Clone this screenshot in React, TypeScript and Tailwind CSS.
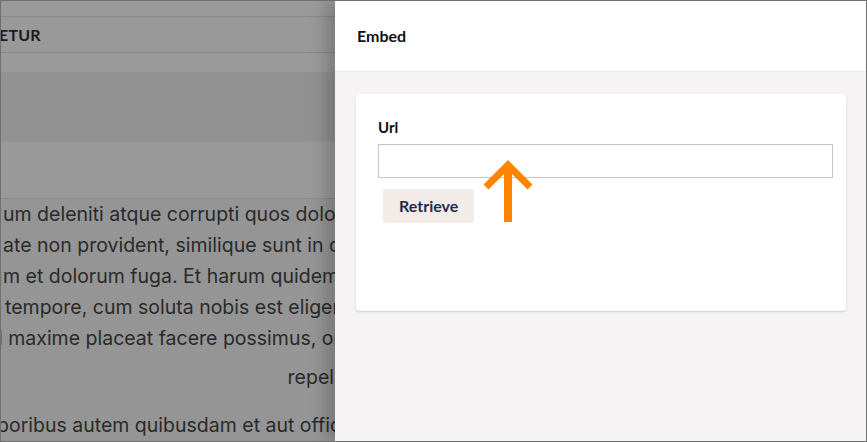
import React from 'react';

const lines = [
  { text: 'um deleniti atque corrupti quos dolores et quas', cls: 'pl-[2px]' },
  { text: 'ate non provident, similique sunt in culpa qui', cls: 'pl-[2px]' },
  { text: 'm et dolorum fuga. Et harum quidem rerum', cls: 'pl-[2px]' },
  { text: 'tempore, cum soluta nobis est eligendi optio', cls: 'pl-[4px]' },
  { text: 'l maxime placeat facere possimus, omnis', cls: 'ml-[-3px]' },
];

const UnderPage: React.FC = () => (
  <div className="w-[334px] shrink-0 flex flex-col bg-[#959595] overflow-hidden font-['Inter',sans-serif]">
    <div className="h-[16px] bg-[#9a9a9a] border-b border-[#888888]" />
    <div className="h-[36px] bg-[#999999] border-b border-[#878787] flex items-center">
      <span className="ml-[-2px] text-[16px] font-bold text-[#1c1c1c] font-['Lato',sans-serif] tracking-[0.2px]">ETUR</span>
    </div>
    <div className="h-[20px] bg-[#9a9a9a] border-b border-[#939393]" />
    <div className="h-[69px] bg-[#929191]" />
    <div className="h-[57px] bg-[#999999] border-b border-[#8b8b8b]" />
    <div className="flex flex-col text-[19.5px] leading-[31px] text-[#2a2a2a] whitespace-nowrap">
      {lines.map((l, i) => (
        <div key={i} className={`overflow-hidden ${l.cls}`}>{l.text}</div>
      ))}
      <div className="mt-[8px] flex justify-end pr-[1px]">repel</div>
      <div className="mt-[17px] ml-[-4px]">poribus autem quibusdam et aut officiis debitis</div>
    </div>
  </div>
);

const App: React.FC = () => {
  return (
    <div className="w-[867px] h-[442px] border border-[#6f6f6f] flex overflow-hidden bg-[#959595]">
      <UnderPage />
      <div className="flex-1 flex flex-col bg-[#f5f3f4] shadow-[-10px_0_14px_rgba(0,0,0,0.18)] z-10 font-['Lato',sans-serif]">
        <div className="h-[71px] shrink-0 bg-white border-b border-[#ebebeb] flex items-center pl-[22px]">
          <span className="text-[16px] font-bold text-[#111111]">Embed</span>
        </div>
        <div className="pt-[22px] pl-[21px] pr-[20px]">
          <div className="relative h-[217px] bg-white rounded-[4px] shadow-[0_1px_2px_rgba(0,0,0,0.18)] pl-[22px] pr-[13px] pt-[23px]">
            <label className="block text-[15px] font-bold text-[#111111] leading-[20px]">Url</label>
            <input
              type="text"
              className="mt-[7px] block w-full h-[34px] border border-[#c4c4c6] bg-white outline-none"
            />
            <button className="mt-[11px] ml-[5px] h-[34px] px-[16px] rounded-[3px] bg-[#f3ebe8] text-[16px] font-bold text-[#1f2b4d]">
              Retrieve
            </button>
            <svg
              className="absolute left-[127px] top-[66px]"
              width="50"
              height="62"
              viewBox="0 0 50 62"
              fill="none"
            >
              <path d="M25 4 V62" stroke="#ff8400" strokeWidth="8" />
              <path d="M3 27 L25 5 L47 27" stroke="#ff8400" strokeWidth="7" strokeLinecap="butt" />
            </svg>
          </div>
        </div>
      </div>
    </div>
  );
};

export default App;
